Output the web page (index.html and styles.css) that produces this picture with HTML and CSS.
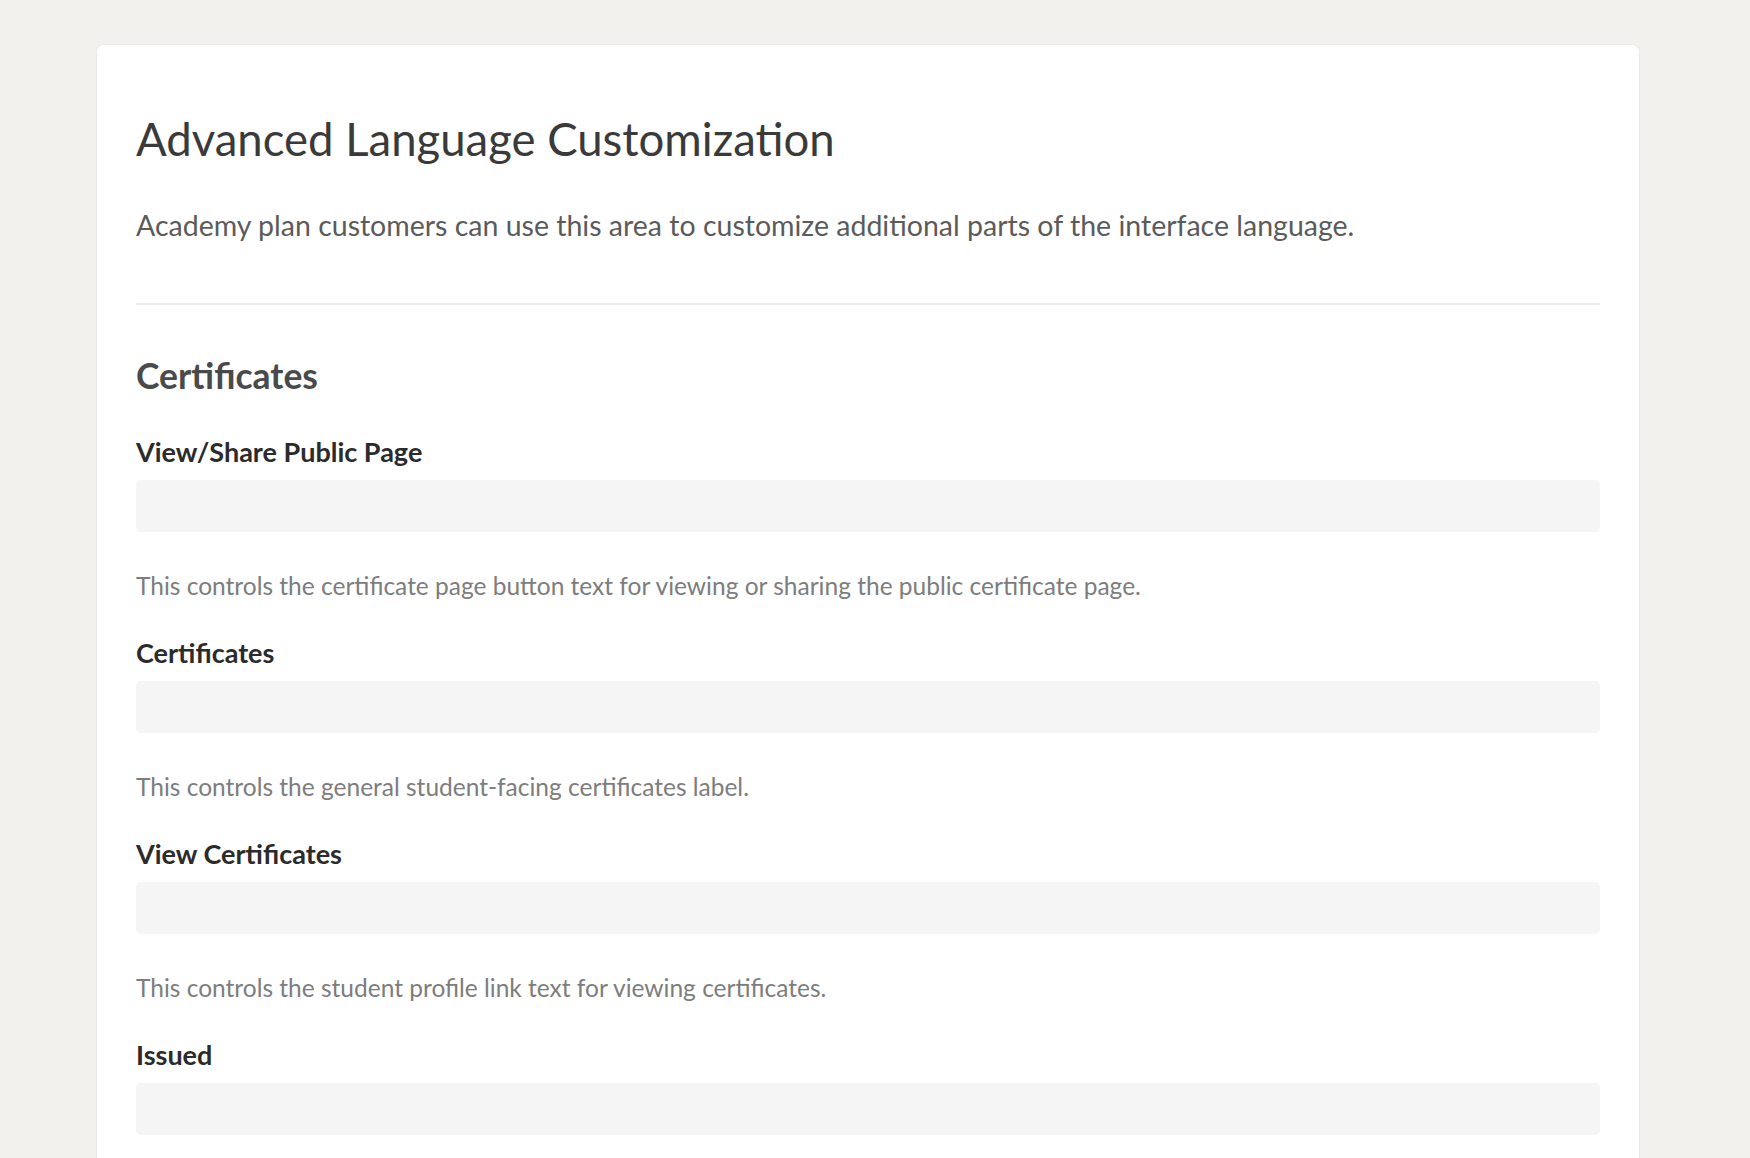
FILE: index.html
```html
<!DOCTYPE html>
<html lang="en">
<head>
<meta charset="utf-8">
<title>Advanced Language Customization</title>
<link rel="stylesheet" href="styles.css">
</head>
<body>
<main class="card">
  <h1 class="title">Advanced Language Customization</h1>
  <p class="intro">Academy plan customers can use this area to customize additional parts of the interface language.</p>
  <hr class="divider">
  <section class="section">
    <h2 class="section-title">Certificates</h2>
    <div class="field">
      <label class="field-label" for="f1">View/Share Public Page</label>
      <input class="field-input" id="f1" type="text">
      <p class="field-help">This controls the certificate page button text for viewing or sharing the public certificate page.</p>
    </div>
    <div class="field">
      <label class="field-label" for="f2">Certificates</label>
      <input class="field-input" id="f2" type="text">
      <p class="field-help">This controls the general student-facing certificates label.</p>
    </div>
    <div class="field">
      <label class="field-label" for="f3">View Certificates</label>
      <input class="field-input" id="f3" type="text">
      <p class="field-help">This controls the student profile link text for viewing certificates.</p>
    </div>
    <div class="field">
      <label class="field-label" for="f4">Issued</label>
      <input class="field-input" id="f4" type="text">
    </div>
  </section>
</main>
</body>
</html>
```
FILE: styles.css
```css
* { box-sizing: border-box; }

html, body {
  margin: 0;
  padding: 0;
  background: #f2f1ee;
  font-family: "Lato", "Noto Sans", sans-serif;
}

body {
  padding: 44px 0 0 96px;
  height: 1158px;
  overflow: hidden;
}

.card {
  width: 1544px;
  min-height: 1200px;
  background: #ffffff;
  border: 1px solid #ebeae7;
  border-radius: 8px;
  padding: 39px 39px 40px 39px;
}

.title {
  margin: 28px 0 0;
  font-size: 45.5px;
  font-weight: 400;
  line-height: 1.2;
  color: #3a3a3a;
}

.intro {
  margin: 37px 0 0;
  font-size: 28.5px;
  line-height: 1.5;
  color: #5b5b5b;
}

.divider {
  margin: 57px 0 0;
  border: 0;
  height: 2px;
  background: #ececec;
}

.section {
  margin-top: 50px;
}

.section-title {
  margin: 0;
  font-size: 35.5px;
  font-weight: 700;
  line-height: 1.2;
  color: #4a4a4a;
}

.field {
  display: flex;
  flex-direction: column;
  margin-top: 38px;
}

.field + .field {
  margin-top: 33px;
}

.field-label {
  font-size: 27px;
  font-weight: 700;
  line-height: 32px;
  color: #2b2b2b;
}

.field-input {
  margin-top: 12px;
  height: 52px;
  width: 100%;
  border: 0;
  border-radius: 5px;
  background: #f5f5f5;
  padding: 0 16px;
  font: inherit;
  font-size: 24px;
  color: #333;
}

.field-help {
  margin: 35px 0 0;
  font-size: 24.5px;
  line-height: 37px;
  color: #7d7d7d;
}
```
